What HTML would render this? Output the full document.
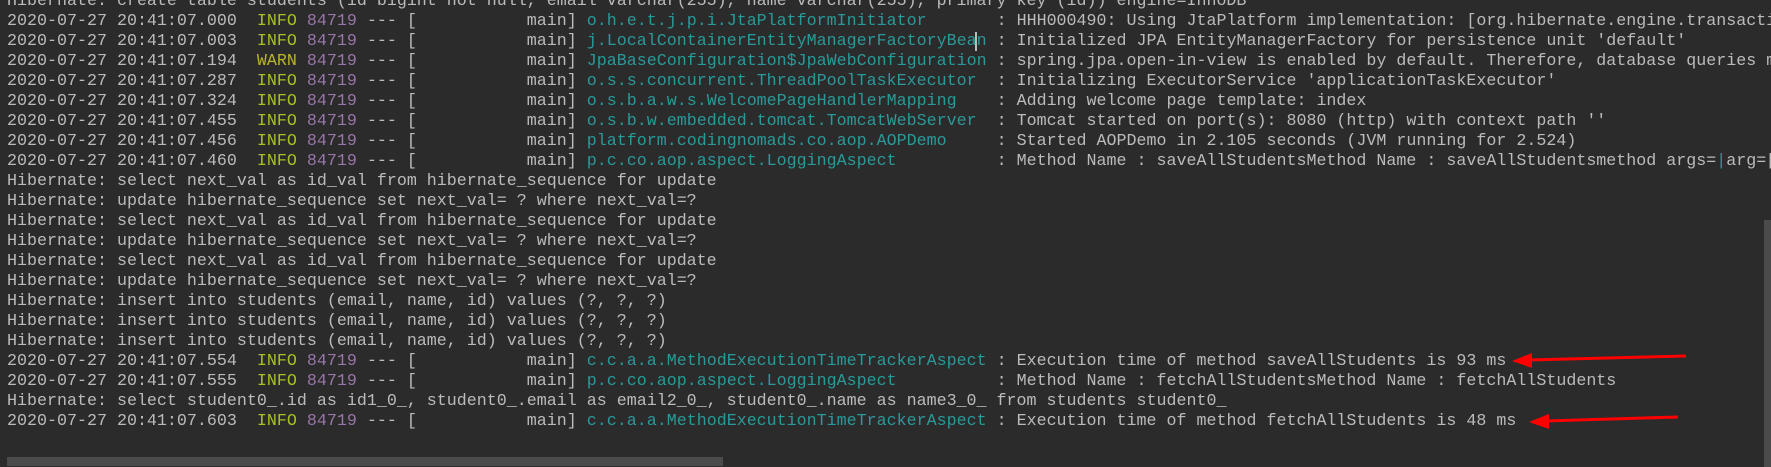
<!DOCTYPE html>
<html><head><meta charset="utf-8"><style>
html,body{margin:0;padding:0;background:#2b2b2b;width:1771px;height:467px;overflow:hidden;position:relative}
pre{position:absolute;left:7px;top:-8px;width:1764px;height:475px;overflow:hidden;margin:0;font-family:"Liberation Mono",monospace;font-size:16.667px;line-height:20px;color:#bbbbbb;white-space:pre}
.i{color:#a8c023}.w{color:#bbb529}.p{color:#9876aa}.l{color:#299999}
.c{border-left:2px solid #bbbbbb;margin-left:-2px}
.hs{position:absolute;left:7px;top:457px;width:716px;height:9px;background:#4b4b4b}
.vs{position:absolute;left:1764px;top:220px;width:7px;height:247px;background:#4b4b4b}
svg{position:absolute;left:0;top:0}
</style></head><body>
<pre>Hibernate: create table students (id bigint not null, email varchar(255), name varchar(255), primary key (id)) engine=InnoDB
2020-07-27 20:41:07.000  <span class="i">INFO</span> <span class="p">84719</span> --- [           main] <span class="l">o.h.e.t.j.p.i.JtaPlatformInitiator      </span> : HHH000490: Using JtaPlatform implementation: [org.hibernate.engine.transaction.jta.platform]
2020-07-27 20:41:07.003  <span class="i">INFO</span> <span class="p">84719</span> --- [           main] <span class="l">j.LocalContainerEntityManagerFactoryBea<span class="c"></span>n</span> : Initialized JPA EntityManagerFactory for persistence unit 'default'
2020-07-27 20:41:07.194  <span class="w">WARN</span> <span class="p">84719</span> --- [           main] <span class="l">JpaBaseConfiguration$JpaWebConfiguration</span> : spring.jpa.open-in-view is enabled by default. Therefore, database queries may be
2020-07-27 20:41:07.287  <span class="i">INFO</span> <span class="p">84719</span> --- [           main] <span class="l">o.s.s.concurrent.ThreadPoolTaskExecutor </span> : Initializing ExecutorService 'applicationTaskExecutor'
2020-07-27 20:41:07.324  <span class="i">INFO</span> <span class="p">84719</span> --- [           main] <span class="l">o.s.b.a.w.s.WelcomePageHandlerMapping   </span> : Adding welcome page template: index
2020-07-27 20:41:07.455  <span class="i">INFO</span> <span class="p">84719</span> --- [           main] <span class="l">o.s.b.w.embedded.tomcat.TomcatWebServer </span> : Tomcat started on port(s): 8080 (http) with context path ''
2020-07-27 20:41:07.456  <span class="i">INFO</span> <span class="p">84719</span> --- [           main] <span class="l">platform.codingnomads.co.aop.AOPDemo    </span> : Started AOPDemo in 2.105 seconds (JVM running for 2.524)
2020-07-27 20:41:07.460  <span class="i">INFO</span> <span class="p">84719</span> --- [           main] <span class="l">p.c.co.aop.aspect.LoggingAspect         </span> : Method Name : saveAllStudentsMethod Name : saveAllStudentsmethod args=<span class="l">|</span>arg=[
Hibernate: select next_val as id_val from hibernate_sequence for update
Hibernate: update hibernate_sequence set next_val= ? where next_val=?
Hibernate: select next_val as id_val from hibernate_sequence for update
Hibernate: update hibernate_sequence set next_val= ? where next_val=?
Hibernate: select next_val as id_val from hibernate_sequence for update
Hibernate: update hibernate_sequence set next_val= ? where next_val=?
Hibernate: insert into students (email, name, id) values (?, ?, ?)
Hibernate: insert into students (email, name, id) values (?, ?, ?)
Hibernate: insert into students (email, name, id) values (?, ?, ?)
2020-07-27 20:41:07.554  <span class="i">INFO</span> <span class="p">84719</span> --- [           main] <span class="l">c.c.a.a.MethodExecutionTimeTrackerAspect</span> : Execution time of method saveAllStudents is 93 ms
2020-07-27 20:41:07.555  <span class="i">INFO</span> <span class="p">84719</span> --- [           main] <span class="l">p.c.co.aop.aspect.LoggingAspect         </span> : Method Name : fetchAllStudentsMethod Name : fetchAllStudents
Hibernate: select student0_.id as id1_0_, student0_.email as email2_0_, student0_.name as name3_0_ from students student0_
2020-07-27 20:41:07.603  <span class="i">INFO</span> <span class="p">84719</span> --- [           main] <span class="l">c.c.a.a.MethodExecutionTimeTrackerAspect</span> : Execution time of method fetchAllStudents is 48 ms</pre>
<div class="hs"></div><div class="vs"></div>
<svg width="1771" height="467">
<line x1="1686" y1="356" x2="1528" y2="360" stroke="#f00" stroke-width="3"/>
<polygon points="1512,361 1532,353 1532,368" fill="#f00"/>
<line x1="1678" y1="417" x2="1545" y2="421" stroke="#f00" stroke-width="3"/>
<polygon points="1529,422 1549,414 1549,429" fill="#f00"/>
</svg>
</body></html>
